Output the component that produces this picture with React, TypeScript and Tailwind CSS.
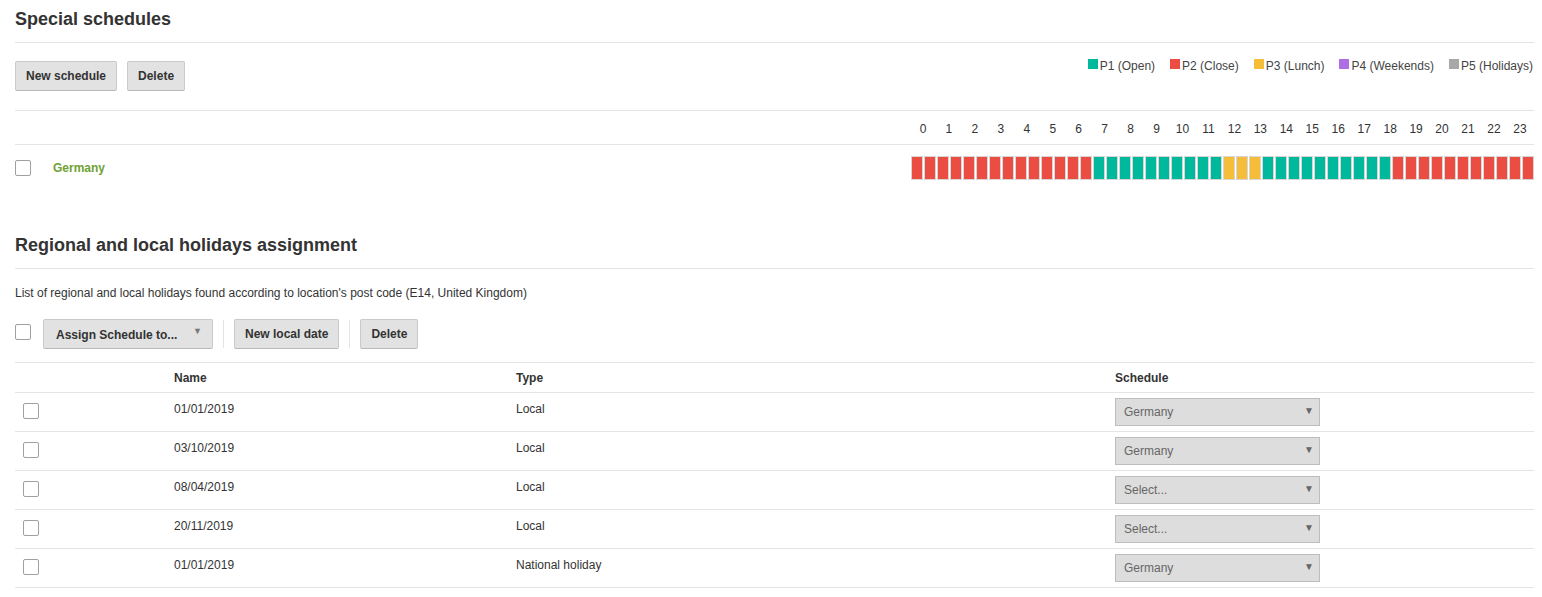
import React from "react";

const R = "#ec4d43";
const T = "#00b99c";
const Y = "#f6bd3b";

const cells: string[] = [
  ...Array(14).fill(R),
  ...Array(10).fill(T),
  ...Array(3).fill(Y),
  ...Array(10).fill(T),
  ...Array(11).fill(R),
];

const legend = [
  { c: "bg-[#00b99c]", t: "P1 (Open)" },
  { c: "bg-[#ec4d43]", t: "P2 (Close)" },
  { c: "bg-[#f6bd3b]", t: "P3 (Lunch)" },
  { c: "bg-[#b06ee6]", t: "P4 (Weekends)" },
  { c: "bg-[#a8a8a8]", t: "P5 (Holidays)" },
];

const rows = [
  { d: "01/01/2019", t: "Local", s: "Germany" },
  { d: "03/10/2019", t: "Local", s: "Germany" },
  { d: "08/04/2019", t: "Local", s: "Select..." },
  { d: "20/11/2019", t: "Local", s: "Select..." },
  { d: "01/01/2019", t: "National holiday", s: "Germany" },
];

function Btn({ children }: { children: React.ReactNode }) {
  return (
    <button className="h-[30px] px-[10px] bg-[#e2e2e2] border border-[#cacaca] border-b-[#b8b8b8] rounded-[2px] text-[12px] font-bold text-[#333] leading-none">
      {children}
    </button>
  );
}

function Check() {
  return <div className="w-[16px] h-[16px] bg-white border border-[#a0a0a0] rounded-[2px]" />;
}

export default function App() {
  return (
    <div
      className="pl-[15px] pr-[8px] bg-white text-[#333] w-[1542px]"
      style={{ fontFamily: '"Liberation Sans", Arial, sans-serif' }}
    >
      {/* Section 1 */}
      <div className="h-[43px] border-b border-[#e4e4e4] pt-[8px]">
        <h1 className="text-[18px] font-bold leading-[22px] text-[#333]">Special schedules</h1>
      </div>
      <div className="h-[68px] border-b border-[#e4e4e4] flex justify-between">
        <div className="flex gap-[10px] pt-[18px]">
          <Btn>New schedule</Btn>
          <Btn>Delete</Btn>
        </div>
        <div className="flex gap-[15px] pt-[15px] pr-[1px] text-[12px] text-[#444] leading-[16px]">
          {legend.map((l) => (
            <div key={l.t} className="flex items-start gap-[2px]">
              <span className={`inline-block w-[10px] h-[10px] mt-[1px] ${l.c}`} />
              <span>{l.t}</span>
            </div>
          ))}
        </div>
      </div>
      <div className="h-[34px] border-b border-[#e4e4e4] flex justify-end">
        <div className="w-[623px] flex items-center">
          {Array.from({ length: 24 }).map((_, i) => (
            <div key={i} className="flex-1 text-center text-[12px] text-[#333] leading-[16px] pt-[2px] pr-[2px]">
              {i}
            </div>
          ))}
        </div>
      </div>
      <div className="h-[45px] flex items-start">
        <div className="pt-[15px]">
          <Check />
        </div>
        <div className="ml-[22px] pt-[15px] text-[12px] font-bold text-[#6fa134] leading-[16px]">Germany</div>
        <div className="flex-1" />
        <div className="w-[623px] flex gap-px pt-[11px]">
          {cells.map((c, i) => (
            <div
              key={i}
              className="flex-1 h-[24px] border border-[#d6d6d6]"
              style={{ backgroundColor: c }}
            />
          ))}
        </div>
      </div>

      {/* Section 2 */}
      <div className="mt-[36px] h-[43px] border-b border-[#e4e4e4] pt-[8px]">
        <h2 className="text-[18px] font-bold leading-[22px] text-[#333]">Regional and local holidays assignment</h2>
      </div>
      <p className="pt-[16px] text-[12px] leading-[16px] text-[#333]">
        List of regional and local holidays found according to location's post code (E14, United Kingdom)
      </p>
      <div className="mt-[18px] flex items-start h-[30px]">
        <div className="pt-[5px]">
          <Check />
        </div>
        <button className="ml-[12px] h-[30px] w-[170px] pl-[12px] pr-[10px] bg-[#e2e2e2] border border-[#cacaca] border-b-[#b8b8b8] rounded-[2px] text-[12px] font-bold text-[#333] flex items-center justify-between">
          <span className="pt-[2px]">Assign Schedule to...</span>
          <span className="text-[9px] text-[#777] -mt-[4px]">▼</span>
        </button>
        <div className="w-px h-[28px] bg-[#e4e4e4] mx-[10px] mt-[1px]" />
        <Btn>New local date</Btn>
        <div className="w-px h-[28px] bg-[#e4e4e4] mx-[10px] mt-[1px]" />
        <Btn>Delete</Btn>
      </div>
      <div className="mt-[13px] border-t border-[#e4e4e4]">
        <div className="grid grid-cols-[159px_342px_599px_1fr] h-[30px] border-b border-[#e4e4e4] items-center text-[12px] font-bold leading-[16px]">
          <div />
          <div>Name</div>
          <div>Type</div>
          <div>Schedule</div>
        </div>
        {rows.map((r, i) => (
          <div
            key={i}
            className="grid grid-cols-[159px_342px_599px_1fr] h-[39px] border-b border-[#e4e4e4] text-[12px] leading-[16px] text-[#333]"
          >
            <div className="pl-[8px] pt-[10px]">
              <Check />
            </div>
            <div className="pt-[8px]">{r.d}</div>
            <div className="pt-[8px]">{r.t}</div>
            <div className="pt-[5px]">
              <div className="w-[205px] h-[28px] bg-[#dddddd] border border-[#bdbdbd] flex items-center justify-between pl-[8px] pr-[5px] text-[#666]">
                <span>{r.s}</span>
                <span className="text-[10px] text-[#666] -mt-[2px]">▼</span>
              </div>
            </div>
          </div>
        ))}
      </div>
    </div>
  );
}
